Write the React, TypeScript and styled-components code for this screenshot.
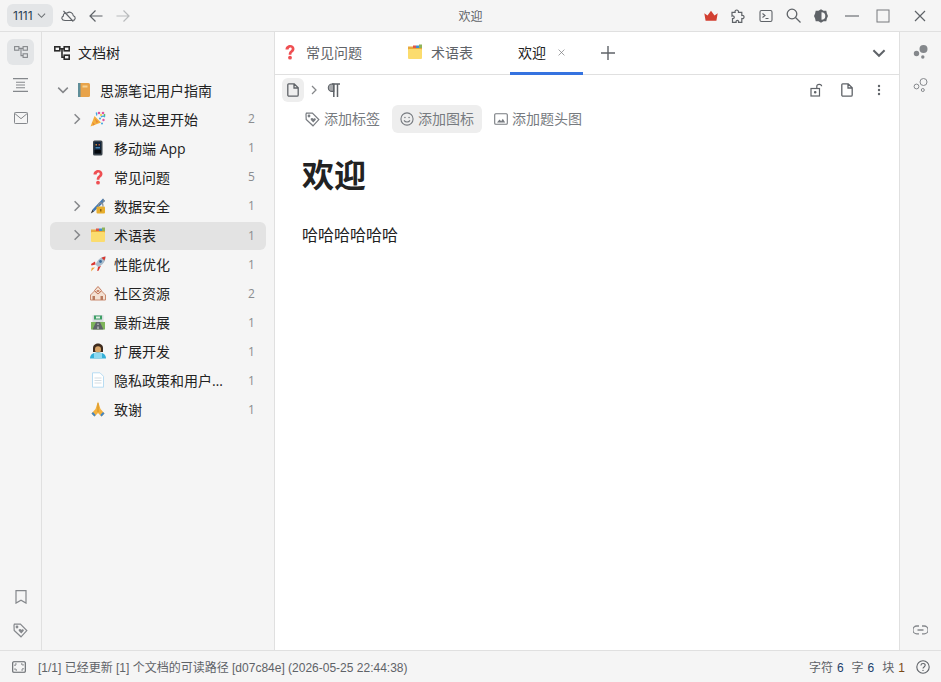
import React from 'react'
import styled, { createGlobalStyle } from 'styled-components'

const GlobalStyle = createGlobalStyle`
  html, body {
    margin: 0;
    height: 100%;
    overflow: hidden;
  }

  body {
    font-family: 'Open Sans', 'Noto Sans CJK SC', sans-serif;
    color: #222;
    background: #fff;
  }

  #root {
    height: 100%;
  }
`

const Page = styled.div`
  height: 682px;
  display: flex;
  flex-direction: column;
`

const TitleBar = styled.header`
  height: 31px;
  flex: none;
  display: flex;
  align-items: center;
  background: #f5f5f5;
  border-bottom: 1px solid #e0e0e0;
  position: relative;
`

const WorkspaceButton = styled.div`
  margin-left: 7px;
  width: 46px;
  height: 23px;
  border-radius: 6px;
  background: #e3e5e7;
  display: flex;
  align-items: center;
  padding-left: 6px;
  box-sizing: border-box;
  gap: 4px;
  font: 12px Inter, sans-serif;
  color: #2a3f55;

  svg {
    color: #6b6f73;
  }
`

const BarIcon = styled.span<{ $left: number; $width?: number }>`
  margin-left: ${(p) => p.$left}px;
  width: ${(p) => p.$width ?? 14}px;
  height: 14px;
  flex: none;
  display: flex;
  align-items: center;
  justify-content: center;
  color: #5f6368;
`

const WindowTitle = styled.div`
  position: absolute;
  left: 0;
  right: 0;
  text-align: center;
  font: 12px 'Noto Sans CJK SC', sans-serif;
  color: #5f6368;
  pointer-events: none;
`

const Grow = styled.div`
  flex: 1;
`

const Body = styled.div`
  flex: 1;
  min-height: 0;
  display: flex;
`

const Dock = styled.nav<{ $side: 'left' | 'right' }>`
  width: 41px;
  flex: none;
  background: #f5f5f5;
  display: flex;
  flex-direction: column;
  align-items: center;
  padding-top: 7px;
  ${(p) => (p.$side === 'left' ? 'border-right: 1px solid #e0e0e0;' : 'border-left: 1px solid #e0e0e0;')}
`

const DockButton = styled.div<{ $active?: boolean }>`
  width: 27px;
  height: 26px;
  flex: none;
  margin-bottom: 7px;
  border-radius: 6px;
  display: flex;
  align-items: center;
  justify-content: center;
  color: #85888c;
  background: ${(p) => (p.$active ? '#e3e5e7' : 'transparent')};
`

const DockSpacer = styled.div`
  flex: 1;
`

const TreePanel = styled.aside`
  width: 216px;
  flex: none;
  background: #f5f5f5;
  border-right: 1px solid #e0e0e0;
  padding: 0 8px;
`

const TreeHeader = styled.div`
  height: 44.3px;
  box-sizing: border-box;
  display: flex;
  align-items: center;
  gap: 8px;
  padding: 0 0 1.5px 4px;
  font-size: 14px;
  line-height: 18px;
  color: #222;
`

const TreeList = styled.ul`
  list-style: none;
  margin: 0;
  padding: 0;
`

const TreeRow = styled.li<{ $depth: number; $selected?: boolean }>`
  height: 28px;
  margin-bottom: 1.05px;
  border-radius: 6px;
  display: flex;
  align-items: center;
  padding-left: ${(p) => (p.$depth === 0 ? 6 : 20)}px;
  padding-bottom: 1px;
  box-sizing: border-box;
  font-size: 14px;
  color: #222;
  background: ${(p) => (p.$selected ? '#e3e3e3' : 'transparent')};
`

const Toggle = styled.span`
  width: 14px;
  height: 14px;
  flex: none;
  color: #85878a;
  display: flex;
  align-items: center;
  justify-content: center;
`

const RowEmoji = styled.span`
  width: 16px;
  height: 16px;
  margin-left: 6px;
  flex: none;
  display: flex;
  align-items: center;
  justify-content: center;
`

const RowLabel = styled.span`
  margin-left: 8px;
  flex: 1;
  min-width: 0;
  white-space: nowrap;
  overflow: hidden;
  text-overflow: ellipsis;
`

const RowCount = styled.span`
  width: 18px;
  flex: none;
  font: 12px 'Open Sans', sans-serif;
  color: #8b8d90;
  text-align: left;
  margin-left: 16px;
`

const Main = styled.main`
  flex: 1;
  min-width: 0;
  display: flex;
  flex-direction: column;
  background: #fff;
`

const TabBar = styled.div`
  height: 42px;
  flex: none;
  display: flex;
  align-items: stretch;
  border-bottom: 1px solid #e0e0e0;
  font-size: 14px;
`

const Tab = styled.div<{ $active?: boolean; $left: number; $width: number }>`
  margin-left: ${(p) => p.$left}px;
  width: ${(p) => p.$width}px;
  flex: none;
  display: flex;
  align-items: center;
  gap: 8px;
  box-sizing: border-box;
  padding-left: ${(p) => (p.$active ? 8 : 0)}px;
  color: ${(p) => (p.$active ? '#222' : '#5f6368')};
  border-bottom: 3px solid ${(p) => (p.$active ? '#3573e0' : 'transparent')};
  margin-bottom: -1px;
`

const TabClose = styled.span`
  margin-left: 4px;
  display: flex;
  color: #77797d;
`

const TabIcon = styled.span`
  width: 16px;
  height: 16px;
  flex: none;
  display: flex;
  align-items: center;
  justify-content: center;
`

const TabAction = styled.div<{ $left?: number; $right?: number }>`
  margin-left: ${(p) => p.$left ?? 0}px;
  margin-right: ${(p) => p.$right ?? 0}px;
  display: flex;
  align-items: center;
  color: #5f6368;
`

const BreadcrumbBar = styled.div`
  height: 30px;
  flex: none;
  display: flex;
  align-items: center;
  padding-left: 7px;
  padding-right: 18px;
`

const CrumbButton = styled.div`
  width: 22px;
  height: 24px;
  border-radius: 6px;
  background: #eeeeee;
  display: flex;
  align-items: center;
  justify-content: center;
  color: #5f6368;
`

const CrumbIcon = styled.span<{ $left: number; $muted?: boolean }>`
  margin-left: ${(p) => p.$left}px;
  display: flex;
  color: ${(p) => (p.$muted ? '#85878a' : '#5f6368')};
`

const ActionRow = styled.div`
  height: 28px;
  flex: none;
  display: flex;
  align-items: center;
  padding-left: 22px;
  gap: 4px;
  font-size: 14px;
  color: #777b80;
`

const AddButton = styled.div<{ $hover?: boolean }>`
  height: 28px;
  padding: 0 8px 2px;
  box-sizing: border-box;
  border-radius: 6px;
  display: flex;
  align-items: center;
  gap: 4px;
  background: ${(p) => (p.$hover ? '#eeeeee' : 'transparent')};

  svg {
    position: relative;
    top: 1px;
  }
`

const DocTitle = styled.h1`
  margin: 20px 0 0 27px;
  font-size: 32px;
  line-height: 44px;
  font-weight: 700;
  color: #222;
`

const Paragraph = styled.p`
  margin: 25px 0 0 27px;
  font-size: 16px;
  line-height: 26px;
  color: #222;
`

const StatusBar = styled.footer`
  height: 32px;
  flex: none;
  display: flex;
  align-items: center;
  background: #f5f5f5;
  border-top: 1px solid #e0e0e0;
  padding: 0 11px 0 12px;
  box-sizing: border-box;
  font: 12px 'Liberation Sans', 'Noto Sans CJK SC', sans-serif;
  color: #5f6368;
`

const StatusMessage = styled.span`
  margin-left: 12px;
`

const Stat = styled.span`
  margin-left: 8px;
  color: #5f6368;

  b {
    font-weight: 400;
    margin-left: 4px;
    color: #1c3f6b;
  }
`

const StatBlock = styled(Stat)`
  b {
    color: #7a4a16;
  }
`

const HelpIcon = styled.span`
  margin-left: 11px;
  display: flex;
  color: #5f6368;
`

type IconProps = { size?: number }

const DockTreeIcon = () => (
  <svg width="14" height="12" viewBox="0 0 14 12" fill="none" stroke="currentColor" strokeWidth="1.100">
    <rect x="0.600" y="0.600" width="4.300" height="3.600" />
    <rect x="9.100" y="0.600" width="4.300" height="3.600" />
    <rect x="9.100" y="7.800" width="4.300" height="3.600" />
    <path d="M4.900 2.400h4.200M7 2.400v7.200h2.100" />
  </svg>
)

const HeaderTreeIcon = () => (
  <svg width="16" height="14" viewBox="0 0 16 14" fill="none" stroke="#2b2b2b" strokeWidth="1.600">
    <rect x="0.800" y="0.800" width="5" height="4" />
    <rect x="10.200" y="0.800" width="5" height="4" />
    <rect x="10.200" y="9.200" width="5" height="4" />
    <path d="M5.800 2.800h4.400M8 2.800v8.400h2.200" />
  </svg>
)

const OutlineIcon = () => (
  <svg width="15" height="14" viewBox="0 0 15 14" fill="none" stroke="currentColor" strokeWidth="1.100">
    <path d="M0 .6h15M3 4.300h9M3 7h9M3 9.700h9M0 13.400h15" />
  </svg>
)

const MailIcon = () => (
  <svg width="14" height="12" viewBox="0 0 14 12" fill="none" stroke="currentColor" strokeWidth="1">
    <rect x="0.500" y="0.500" width="13" height="11" rx="0.800" />
    <path d="M.8 1.500L7 6.700l6.200-5.200" />
  </svg>
)

const BookmarkIcon = () => (
  <svg width="12" height="14" viewBox="0 0 12 14" fill="none" stroke="currentColor" strokeWidth="1.200">
    <path d="M1 .7h10v12.400L6 10.200l-5 2.900z" />
  </svg>
)

const TagIcon = ({ size = 15 }: IconProps) => (
  <svg width={size} height={size} viewBox="0 0 15 15" fill="none" stroke="currentColor" strokeWidth="1.200">
    <path d="M1 2.200l.4-1 6-.2 6.400 6.600-5.800 6.200L1.200 7.400z" />
    <circle cx="4" cy="4" r="0.800" />
    <path
      d="M8.300 10.400L5.900 8c-.9-1.200.8-2.600 2-1.500l.4.4.4-.4c1.200-1 2.800.4 1.900 1.500z"
      fill="currentColor"
      stroke="none"
    />
  </svg>
)

const ChevronRight = ({ size = 12 }: IconProps) => (
  <svg width={size} height={size} viewBox="0 0 12 12" fill="none" stroke="currentColor" strokeWidth="1.500">
    <path d="M3.600 1.200L8.400 6l-4.800 4.800" />
  </svg>
)

const ChevronDown = ({ size = 12, width = 1.500 }: IconProps & { width?: number }) => (
  <svg width={size} height={size} viewBox="0 0 12 12" fill="none" stroke="currentColor" strokeWidth={width}>
    <path d="M1.200 3.600L6 8.400l4.800-4.800" />
  </svg>
)

const CloudOff = () => (
  <svg width="15" height="14" viewBox="0 0 15 14" fill="none" stroke="currentColor" strokeWidth="1.100">
    <path d="M4 11.500h7.600c3.200-.2 3.400-4 .7-4.800C12 3.600 8.500 2 6.200 4 3.600 3.600 2 5.200 2.400 6.900 0 8 .3 11.300 4 11.500z" />
    <path d="M2.500 2l9.800 10.500" />
  </svg>
)

const ArrowLeft = () => (
  <svg width="14" height="14" viewBox="0 0 14 14" fill="none" stroke="currentColor" strokeWidth="1.200">
    <path d="M13.500 7H1M6.500 1.500L1 7l5.500 5.500" />
  </svg>
)

const ArrowRight = () => (
  <svg width="14" height="14" viewBox="0 0 14 14" fill="none" stroke="#b9bbbd" strokeWidth="1.200">
    <path d="M.5 7H13M7.500 1.500L13 7l-5.500 5.500" />
  </svg>
)

const Crown = () => (
  <svg width="14" height="12" viewBox="0 0 14 12">
    <path d="M.3 3.200l3.200 2.300L7 .8l3.500 4.700 3.200-2.300-1.300 7.600H1.600z" fill="#d23f31" />
  </svg>
)

const PuzzleIcon = () => (
  <svg width="14" height="14" viewBox="0 0 14 14" fill="none" stroke="currentColor" strokeWidth="1.200">
    <path d="M1 3.400h3.100C3.300.2 8 .2 7.500 3.400h3.300v3c3-.7 3 3.700 0 3.100v3.800H7.600c.6-2.600-3-2.600-2.500 0H1.500V9.600c2.400.4 2.400-3-.2-2.600l-.3.100z" />
  </svg>
)

const TerminalIcon = () => (
  <svg width="14" height="14" viewBox="0 0 14 14" fill="none" stroke="currentColor" strokeWidth="1.100">
    <rect x="1" y="1.500" width="12" height="11" rx="1.500" />
    <path d="M3.500 4.500L6 6.500 3.500 8.500M6.500 9.500h3" />
  </svg>
)

const SearchIcon = () => (
  <svg width="15" height="15" viewBox="0 0 15 15" fill="none" stroke="currentColor" strokeWidth="1.300">
    <circle cx="6" cy="6" r="4.800" />
    <path d="M9.500 9.500l5 5" />
  </svg>
)

const ThemeIcon = () => (
  <svg width="14" height="14" viewBox="0 0 14 14">
    <path
      d="M4.500 1.700L7 .2l2.500 1.500 2.800.1.600 2.700L14 7l-1.100 2.500-.6 2.700-2.800.1L7 13.800l-2.500-1.500-2.800-.1-.6-2.700L0 7l1.100-2.500.6-2.700z"
      fill="#5f6368"
    />
    <path d="M7.500 3.200a3.800 3.800 0 010 7.600z" fill="#f5f5f5" />
  </svg>
)

const Minimize = () => (
  <svg width="14" height="14" viewBox="0 0 14 14" stroke="currentColor" strokeWidth="1.100">
    <path d="M0 7h14" />
  </svg>
)

const Maximize = () => (
  <svg width="14" height="14" viewBox="0 0 14 14" fill="none" stroke="#77797d" strokeWidth="1">
    <rect x="1" y="1" width="12" height="12" />
  </svg>
)

const CloseIcon = ({ size = 12, width = 1.200 }: IconProps & { width?: number }) => (
  <svg width={size} height={size} viewBox="0 0 12 12" stroke="currentColor" strokeWidth={width}>
    <path d="M1 1l10 10M11 1L1 11" />
  </svg>
)

const DotsFilled = () => (
  <svg width="16" height="16" viewBox="0 0 16 16" fill="#85888c">
    <circle cx="10.500" cy="5" r="4" />
    <circle cx="3.500" cy="9.500" r="2.700" />
    <circle cx="9.800" cy="13" r="1.700" />
  </svg>
)

const DotsOutline = () => (
  <svg width="16" height="16" viewBox="0 0 16 16" fill="none" stroke="#85888c" strokeWidth="1">
    <circle cx="10.500" cy="5" r="3.500" />
    <circle cx="3.500" cy="9.500" r="2.400" />
    <circle cx="9.800" cy="13" r="1.500" />
  </svg>
)

const LinkIcon = () => (
  <svg width="15" height="10" viewBox="0 0 15 10" fill="none" stroke="#85888c" strokeWidth="1.300">
    <path d="M6 1H3.800a3.800 3.800 0 000 7.800H6M9 1h2.200a3.800 3.800 0 010 7.800H9M4.500 5h6" />
  </svg>
)

const PlusIcon = () => (
  <svg width="14" height="14" viewBox="0 0 14 14" stroke="currentColor" strokeWidth="1.400">
    <path d="M7 0v14M0 7h14" />
  </svg>
)

const DocIcon = () => (
  <svg width="12" height="14" viewBox="0 0 12 14" fill="none" stroke="currentColor" strokeWidth="1.300">
    <path d="M1.700.8h5.500l4 4v7.200c0 .7-.5 1.200-1.200 1.200H2c-.7 0-1.200-.5-1.200-1.200V1.700c0-.5.400-.9.900-.9zM7 1v4h4" />
  </svg>
)

const UnlockIcon = () => (
  <svg width="14" height="14" viewBox="0 0 14 14" fill="none" stroke="currentColor" strokeWidth="1.200">
    <rect x="1" y="5.500" width="8.500" height="7.500" />
    <circle cx="5.200" cy="9.200" r="0.700" fill="currentColor" />
    <path d="M6.800 5.500V3.300c0-2.700 4.800-2.700 4.800 0" />
  </svg>
)

const MoreIcon = () => (
  <svg width="4" height="12" viewBox="0 0 4 12" fill="currentColor">
    <circle cx="2" cy="2" r="1.200" />
    <circle cx="2" cy="6" r="1.200" />
    <circle cx="2" cy="10" r="1.200" />
  </svg>
)

const ParagraphMark = () => (
  <svg width="13" height="14" viewBox="0 0 13 14" fill="none" stroke="currentColor" strokeWidth="1.500">
    <path d="M6.800 1v7.400H5a3.700 3.700 0 010-7.400z" fill="currentColor" fillOpacity="0.550" strokeWidth="1.100" />
    <path d="M5 1h8M6.800 1v13M10.500 1v13" />
  </svg>
)

const SmileIcon = () => (
  <svg width="14" height="14" viewBox="0 0 15 15" fill="none" stroke="currentColor" strokeWidth="1.200">
    <circle cx="7.500" cy="7.500" r="6.500" />
    <circle cx="5.300" cy="6" r="0.800" fill="currentColor" stroke="none" />
    <circle cx="9.700" cy="6" r="0.800" fill="currentColor" stroke="none" />
    <path d="M4.300 9c1.500 2.300 5 2.300 6.400 0" />
  </svg>
)

const ImageIcon = () => (
  <svg width="14" height="12" viewBox="0 0 14 12" fill="none" stroke="currentColor" strokeWidth="1.100">
    <rect x="0.700" y="0.700" width="12.600" height="10.600" rx="1" />
    <path d="M3 9.500l2.500-3 1.700 1.700 1.600-2.400 2.400 3.700z" fill="currentColor" stroke="none" />
  </svg>
)

const ScreenIcon = () => (
  <svg width="14" height="12" viewBox="0 0 14 12" fill="none" stroke="currentColor" strokeWidth="1.100">
    <rect x="0.700" y="0.700" width="12.600" height="10.600" rx="1" />
    <path d="M3 5V3h2M9 3h2v2M11 7v2H9M5 9H3V7" strokeWidth="1" strokeDasharray="1.400 0.800" />
  </svg>
)

const HelpCircle = () => (
  <svg width="14" height="14" viewBox="0 0 14 14" fill="none" stroke="currentColor" strokeWidth="1.100">
    <circle cx="7" cy="7" r="6.200" />
    <path d="M4.900 5.400C5 2.900 9.200 3 9.200 5.300c0 1.700-2.200 1.600-2.200 3.300" />
    <circle cx="7" cy="10.400" r="0.700" fill="currentColor" stroke="none" />
  </svg>
)

// hand-drawn colour emoji, there is no emoji font on the page
const emojiArt: Record<string, React.ReactNode> = {
  book: (
    <>
      <rect x="2" y="1" width="12" height="14" rx="1.500" fill="#e8a34a" />
      <rect x="2" y="1" width="2.500" height="14" fill="#5f8e99" />
      <rect x="6.500" y="3.500" width="5" height="2" fill="#f6d394" />
    </>
  ),
  party: (
    <>
      <path d="M.5 15.500L4.500 5l6.500 6.500z" fill="#f4b13d" />
      <path d="M2.500 11l2.500 2.500-2 1zM4.500 7l4 4-2 1z" fill="#e8893a" />
      <path d="M6 1.500c1 1 1 2 .5 3M11 6c1-1 3-1 4 0" stroke="#3fa7e0" strokeWidth="1.300" fill="none" />
      <circle cx="9" cy="2" r="1.300" fill="#e0559f" />
      <circle cx="13" cy="2" r="1.300" fill="#e0559f" />
      <circle cx="11" cy="4" r="1" fill="#f2c53d" />
      <circle cx="14.500" cy="4" r="0.900" fill="#4fb36a" />
      <circle cx="13.500" cy="9" r="1.200" fill="#e0559f" />
      <circle cx="10" cy="7.500" r="1" fill="#3fa7e0" />
      <circle cx="12" cy="12.500" r="1" fill="#3fa7e0" />
    </>
  ),
  phone: (
    <>
      <rect x="3" y="0.500" width="9.500" height="15" rx="1.500" fill="#39424a" />
      <rect x="4.500" y="2" width="6.500" height="11.500" fill="#10233a" />
      <rect x="5.500" y="4" width="1.500" height="1.500" fill="#c8873a" />
      <rect x="8.500" y="4" width="1.500" height="1.500" fill="#b2543f" />
      <rect x="5.500" y="7" width="4.500" height="1.500" fill="#3f7fb0" />
      <rect x="4.500" y="10" width="6.500" height="3.500" fill="#05080c" />
    </>
  ),
  question: (
    <>
      <path
        d="M3.500 5.500C3.500-.5 12.500-.5 12.500 4.800c0 3.400-3.100 3.200-3.100 6H6.700c0-4 3-4 3-6 0-2-3-2-3.100.7z"
        fill="#ef4f52"
      />
      <circle cx="8" cy="13.700" r="1.900" fill="#ef4f52" />
    </>
  ),
  lock: (
    <>
      <path d="M13 .5L2.500 11.500l1.500 2L15 3z" fill="#3f78b5" />
      <path d="M13 .5L15 3l-2.500 1.800z" fill="#7f8a93" />
      <rect x="6.500" y="8.500" width="8.500" height="7" rx="1" fill="#e8ae2d" />
      <path d="M8.500 8.500V7a2.200 2.200 0 014.400 0v1.500" stroke="#8a8f94" strokeWidth="1.200" fill="none" />
      <path d="M.8 15.500l1.700-4 1.500 2z" fill="#33373b" />
      <rect x="10" y="11" width="1.500" height="2.500" fill="#8c6412" />
    </>
  ),
  folder: (
    <>
      <path d="M1 2.500h5l1.500 1.500H15v2H1z" fill="#e9a93c" />
      <rect x="6" y="1.500" width="3" height="2.500" fill="#e0574a" />
      <rect x="9" y="1.500" width="3" height="2.500" fill="#3f8fcf" />
      <rect x="12" y="0.500" width="3" height="3.500" fill="#8fb35a" />
      <rect x="1" y="5" width="14" height="10" rx="1" fill="#fbdc6e" />
    </>
  ),
  rocket: (
    <>
      <path d="M15.500 .5C10.500 1 7.500 4 5.500 8.500L8 11c4.500-2 7.500-5 7.500-10.500z" fill="#a9bccb" />
      <path d="M15.500 .5c-1.500.2-2.800.6-4 1.200l2.800 2.800c.7-1.200 1.100-2.500 1.200-4z" fill="#d9372f" />
      <path d="M5.500 8.500L1.500 9.500 1 8l4-2.500zM8 11l-.8 4 1.300-.3 2.500-5z" fill="#d9372f" />
      <path d="M5 11.500l-4 4 .8-3.800z" fill="#f2a33a" />
      <circle cx="10.500" cy="5.500" r="1.400" fill="#3a6c9e" />
    </>
  ),
  houses: (
    <>
      <path d="M.5 10L4.500 6 8 9l3.500-3 4 4v5H.5z" fill="#f3e1d3" stroke="#c98a6e" strokeWidth="1" />
      <path d="M4.500 5.500L8 1.500l3.500 4L8 9z" fill="#f3e1d3" stroke="#c47b5f" strokeWidth="1" />
      <rect x="2.500" y="11" width="2.500" height="4" fill="#b87a5e" />
      <rect x="10.500" y="11" width="2.500" height="4" fill="#b87a5e" />
      <rect x="6.700" y="5" width="2.600" height="2" fill="#c98a6e" />
    </>
  ),
  road: (
    <>
      <rect x="1" y="8" width="14" height="7.500" fill="#7eb55b" />
      <path d="M6 8h4l3.500 7.500h-11z" fill="#5f6469" />
      <rect x="2.500" y="1" width="11" height="7" rx="0.500" fill="#d9dde0" />
      <rect x="4" y="1.500" width="8" height="4" fill="#3ea066" />
      <rect x="6" y="2.500" width="4" height="2" fill="#e6f2e9" />
      <path d="M8 9.500v1.500M8 12.500V15" stroke="#ffffff" strokeWidth="0.800" />
    </>
  ),
  coder: (
    <>
      <path d="M3 9V5c0-6 10-6 10 0v4z" fill="#3f2c1e" />
      <ellipse cx="8" cy="6.500" rx="3" ry="3.300" fill="#d8a468" />
      <path d="M0 15.500c0-4 3-6 8-6s8 2 8 6z" fill="#35b0d8" />
      <rect x="4" y="10" width="8" height="5" fill="#8fd9ef" />
    </>
  ),
  page: (
    <>
      <path d="M2.500 .8h7.500l3.500 3.500v10.900h-11z" fill="#fff" stroke="#b8dcf2" strokeWidth="1" />
      <path d="M4.500 6h7M4.500 8.500h7M4.500 11h7" stroke="#d5dde2" strokeWidth="1" />
    </>
  ),
  pray: (
    <>
      <path d="M8 .5L5.500 8 1.500 12.500l3 3L8 12l3.500 3.500 3-3L10.500 8z" fill="#f4b13d" />
      <path d="M1.500 12.500l3 3 1.200-1.500-2.700-3zM14.500 12.500l-3 3-1.200-1.500 2.700-3z" fill="#3f86c9" />
      <path d="M8 2v9" stroke="#c98a22" strokeWidth="0.800" />
    </>
  ),
}

const Emoji = ({ name }: { name: string }) => (
  <svg width="16" height="16" viewBox="0 0 16 16">
    {emojiArt[name]}
  </svg>
)

type Doc = { emoji: string; label: string; count: number; children?: boolean; selected?: boolean }

const docs: Doc[] = [
  { emoji: 'party', label: '请从这里开始', count: 2, children: true },
  { emoji: 'phone', label: '移动端 App', count: 1 },
  { emoji: 'question', label: '常见问题', count: 5 },
  { emoji: 'lock', label: '数据安全', count: 1, children: true },
  { emoji: 'folder', label: '术语表', count: 1, children: true, selected: true },
  { emoji: 'rocket', label: '性能优化', count: 1 },
  { emoji: 'houses', label: '社区资源', count: 2 },
  { emoji: 'road', label: '最新进展', count: 1 },
  { emoji: 'coder', label: '扩展开发', count: 1 },
  { emoji: 'page', label: '隐私政策和用户协议', count: 1 },
  { emoji: 'pray', label: '致谢', count: 1 },
]

const App: React.FC = () => {
  return (
    <Page>
      <GlobalStyle />
      <TitleBar>
        <WorkspaceButton>
          1111
          <ChevronDown size={9} width={1.400} />
        </WorkspaceButton>
        <BarIcon $left={8} $width={15}><CloudOff /></BarIcon>
        <BarIcon $left={13}><ArrowLeft /></BarIcon>
        <BarIcon $left={13}><ArrowRight /></BarIcon>
        <WindowTitle>欢迎</WindowTitle>
        <Grow />
        <BarIcon $left={0}><Crown /></BarIcon>
        <BarIcon $left={13}><PuzzleIcon /></BarIcon>
        <BarIcon $left={14}><TerminalIcon /></BarIcon>
        <BarIcon $left={13} $width={15}><SearchIcon /></BarIcon>
        <BarIcon $left={13}><ThemeIcon /></BarIcon>
        <BarIcon $left={17}><Minimize /></BarIcon>
        <BarIcon $left={17}><Maximize /></BarIcon>
        <BarIcon $left={23}><CloseIcon /></BarIcon>
        <BarIcon $left={0} />
      </TitleBar>
      <Body>
        <Dock $side="left">
          <DockButton $active><DockTreeIcon /></DockButton>
          <DockButton><OutlineIcon /></DockButton>
          <DockButton><MailIcon /></DockButton>
          <DockSpacer />
          <DockButton><BookmarkIcon /></DockButton>
          <DockButton><TagIcon /></DockButton>
        </Dock>
        <TreePanel>
          <TreeHeader>
            <HeaderTreeIcon />
            <span>文档树</span>
          </TreeHeader>
          <TreeList>
            <TreeRow $depth={0}>
              <Toggle><ChevronDown /></Toggle>
              <RowEmoji><Emoji name="book" /></RowEmoji>
              <RowLabel>思源笔记用户指南</RowLabel>
            </TreeRow>
            {docs.map((doc) => (
              <TreeRow key={doc.label} $depth={1} $selected={doc.selected}>
                <Toggle>{doc.children && <ChevronRight />}</Toggle>
                <RowEmoji><Emoji name={doc.emoji} /></RowEmoji>
                <RowLabel>{doc.label}</RowLabel>
                <RowCount>{doc.count}</RowCount>
              </TreeRow>
            ))}
          </TreeList>
        </TreePanel>
        <Main>
          <TabBar>
            <Tab $left={7} $width={107}>
              <TabIcon><Emoji name="question" /></TabIcon>
              常见问题
            </Tab>
            <Tab $left={18} $width={103}>
              <TabIcon><Emoji name="folder" /></TabIcon>
              术语表
            </Tab>
            <Tab $left={0} $width={73} $active>
              欢迎
              <TabClose><CloseIcon size={7} width={1.200} /></TabClose>
            </Tab>
            <TabAction $left={18}><PlusIcon /></TabAction>
            <Grow />
            <TabAction $right={13}><ChevronDown size={14} width={1.700} /></TabAction>
          </TabBar>
          <BreadcrumbBar>
            <CrumbButton><DocIcon /></CrumbButton>
            <CrumbIcon $left={5} $muted><ChevronRight size={10} /></CrumbIcon>
            <CrumbIcon $left={8}><ParagraphMark /></CrumbIcon>
            <Grow />
            <CrumbIcon $left={0}><UnlockIcon /></CrumbIcon>
            <CrumbIcon $left={17}><DocIcon /></CrumbIcon>
            <CrumbIcon $left={24}><MoreIcon /></CrumbIcon>
          </BreadcrumbBar>
          <ActionRow>
            <AddButton><TagIcon />添加标签</AddButton>
            <AddButton $hover><SmileIcon />添加图标</AddButton>
            <AddButton><ImageIcon />添加题头图</AddButton>
          </ActionRow>
          <DocTitle>欢迎</DocTitle>
          <Paragraph>哈哈哈哈哈哈</Paragraph>
        </Main>
        <Dock $side="right">
          <DockButton><DotsFilled /></DockButton>
          <DockButton><DotsOutline /></DockButton>
          <DockSpacer />
          <DockButton><LinkIcon /></DockButton>
        </Dock>
      </Body>
      <StatusBar>
        <ScreenIcon />
        <StatusMessage>[1/1] 已经更新 [1] 个文档的可读路径 [d07c84e] (2026-05-25 22:44:38)</StatusMessage>
        <Grow />
        <Stat>字符<b>6</b></Stat>
        <Stat>字<b>6</b></Stat>
        <StatBlock>块<b>1</b></StatBlock>
        <HelpIcon><HelpCircle /></HelpIcon>
      </StatusBar>
    </Page>
  )
}

export default App
